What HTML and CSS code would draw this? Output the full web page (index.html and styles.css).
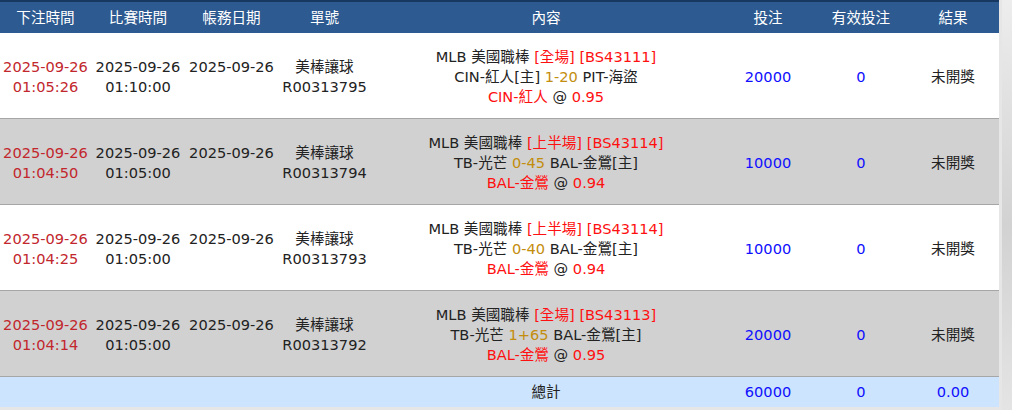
FILE: index.html
```html
<!DOCTYPE html>
<html lang="zh-Hant">
<head>
    <meta charset="UTF-8">
    <meta name="viewport" content="width=device-width, initial-scale=1.0">
    <title>注單記錄</title>
    <link rel="stylesheet" href="styles.css">
</head>
<body>

<div class="page">
    <table class="bets">
        <thead>
            <tr>
                <th class="c1">下注時間</th>
                <th class="c2">比賽時間</th>
                <th class="c3">帳務日期</th>
                <th class="c4">單號</th>
                <th class="c5">內容</th>
                <th class="c6">投注</th>
                <th class="c7">有效投注</th>
                <th class="c8">結果</th>
            </tr>
        </thead>
        <tbody>
            <tr class="row-white">
                <td class="red">2025-09-26<br>01:05:26</td>
                <td>2025-09-26<br>01:10:00</td>
                <td>2025-09-26<br>&nbsp;</td>
                <td>美棒讓球<br>R00313795</td>
                <td>MLB 美國職棒 <span class="hl">[全場] [BS43111]</span><br>CIN-紅人[主] <span class="line">1-20</span> PIT-海盜<br><span class="hl">CIN-紅人</span> @ <span class="hl">0.95</span></td>
                <td class="num">20000</td>
                <td class="num">0</td>
                <td>未開獎</td>
            </tr>
            <tr class="row-gray">
                <td class="red">2025-09-26<br>01:04:50</td>
                <td>2025-09-26<br>01:05:00</td>
                <td>2025-09-26<br>&nbsp;</td>
                <td>美棒讓球<br>R00313794</td>
                <td>MLB 美國職棒 <span class="hl">[上半場] [BS43114]</span><br>TB-光芒 <span class="line">0-45</span> BAL-金鶯[主]<br><span class="hl">BAL-金鶯</span> @ <span class="hl">0.94</span></td>
                <td class="num">10000</td>
                <td class="num">0</td>
                <td>未開獎</td>
            </tr>
            <tr class="row-white">
                <td class="red">2025-09-26<br>01:04:25</td>
                <td>2025-09-26<br>01:05:00</td>
                <td>2025-09-26<br>&nbsp;</td>
                <td>美棒讓球<br>R00313793</td>
                <td>MLB 美國職棒 <span class="hl">[上半場] [BS43114]</span><br>TB-光芒 <span class="line">0-40</span> BAL-金鶯[主]<br><span class="hl">BAL-金鶯</span> @ <span class="hl">0.94</span></td>
                <td class="num">10000</td>
                <td class="num">0</td>
                <td>未開獎</td>
            </tr>
            <tr class="row-gray">
                <td class="red">2025-09-26<br>01:04:14</td>
                <td>2025-09-26<br>01:05:00</td>
                <td>2025-09-26<br>&nbsp;</td>
                <td>美棒讓球<br>R00313792</td>
                <td>MLB 美國職棒 <span class="hl">[全場] [BS43113]</span><br>TB-光芒 <span class="line">1+65</span> BAL-金鶯[主]<br><span class="hl">BAL-金鶯</span> @ <span class="hl">0.95</span></td>
                <td class="num">20000</td>
                <td class="num">0</td>
                <td>未開獎</td>
            </tr>
        </tbody>
        <tfoot>
            <tr>
                <td colspan="4"></td>
                <td>總計</td>
                <td class="num">60000</td>
                <td class="num">0</td>
                <td class="num">0.00</td>
            </tr>
        </tfoot>
    </table>
</div>

</body>
</html>
```

FILE: styles.css
```css
html, body {
    margin: 0;
    padding: 0;
}

body {
    font-family: "DejaVu Sans", "Noto Sans CJK TC", sans-serif;
    font-size: 14.6px;
    color: #222;
    background-color: #d9d9d9;
    background-image:
        radial-gradient(ellipse at 30% 20%, rgba(255, 255, 255, 0.6), transparent 60%),
        linear-gradient(180deg, #ededed, #d2d2d2 55%, #e4e4e4);
    height: 410px;
    overflow: hidden;
}

.page {
    width: 999px;
    background: #e6e6e6;
    height: 410px;
    border-right: 3px solid #e6e6e6;
}

.bets {
    width: 999px;
    border-collapse: collapse;
    table-layout: fixed;
    text-align: center;
    line-height: 20px;
}

.bets th {
    background: #2d5a90;
    color: #fff;
    font-weight: normal;
    height: 31px;
    padding: 0;
    border-top: 2px solid #173861;
    vertical-align: middle;
}

.c1 { width: 91px; }
.c2 { width: 94px; }
.c3 { width: 93px; }
.c4 { width: 93px; }
.c5 { width: 350px; }
.c6 { width: 94px; }
.c7 { width: 92px; }
.c8 { width: 92px; }

.bets td {
    padding: 0;
    vertical-align: middle;
    white-space: nowrap;
}

.bets tbody td {
    height: 82px;
    padding-top: 3px;
    border-bottom: 1px solid #a6a6a6;
}

.row-white td {
    background: #fff;
}

.row-gray td {
    background: #d1d1d1;
}

.bets tfoot td {
    background: #cce4fd;
    height: 30px;
}

.red {
    color: #c2272d;
}

.hl {
    color: #ff1010;
}

.line {
    color: #c38d0d;
}

.num {
    color: #1010ff;
}
```
